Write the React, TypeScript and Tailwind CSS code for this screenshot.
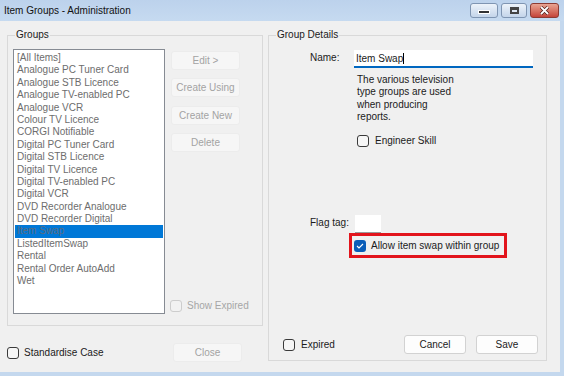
import { ReactNode } from 'react';

const groups = [
  '[All Items]',
  'Analogue PC Tuner Card',
  'Analogue STB Licence',
  'Analogue TV-enabled PC',
  'Analogue VCR',
  'Colour TV Licence',
  'CORGI Notifiable',
  'Digital PC Tuner Card',
  'Digital STB Licence',
  'Digital TV Licence',
  'Digital TV-enabled PC',
  'Digital VCR',
  'DVD Recorder Analogue',
  'DVD Recorder Digital',
  'Item Swap',
  'ListedItemSwap',
  'Rental',
  'Rental Order AutoAdd',
  'Wet',
];

function CheckBox({ checked, disabled }: { checked?: boolean; disabled?: boolean }) {
  if (checked) {
    return (
      <span className="w-[12px] h-[12px] rounded-[3px] bg-[#0a5db8] flex items-center justify-center shrink-0">
        <svg width="8" height="6" viewBox="0 0 8 6">
          <path d="M1 3 L3 5 L7 1" fill="none" stroke="#fff" strokeWidth="1.1" />
        </svg>
      </span>
    );
  }
  return (
    <span
      className={
        disabled
          ? 'w-[12px] h-[12px] rounded-[3px] border border-[#cdcdcd] bg-[#f2f2f2] shrink-0'
          : 'w-[12px] h-[12px] rounded-[3px] border border-[#3a3a3a] bg-[#f6f6f6] shrink-0'
      }
    />
  );
}

function Button({ children, disabled }: { children: ReactNode; disabled?: boolean }) {
  return (
    <div
      className={
        disabled
          ? 'h-[19px] w-[69px] rounded-[3px] border border-[#ececec] bg-[#f6f6f6] text-[#a3a3a3] flex items-center justify-center'
          : 'h-[19px] w-[62px] rounded-[3px] border border-[#d2d2d2] bg-[#fdfdfd] text-[#1b1b1b] flex items-center justify-center'
      }
    >
      {children}
    </div>
  );
}

function GroupBox({ title, className, children }: { title: string; className: string; children: ReactNode }) {
  return (
    <div className={`relative border border-[#d9d9d9] ${className}`}>
      <span className="absolute left-[7px] -top-[7px] bg-[#f0f0f0] px-[1px] leading-[12px] text-[#1b1b1b]">
        {title}
      </span>
      {children}
    </div>
  );
}

export default function App() {
  return (
    <div className="w-[564px] h-[376px] bg-[#c4d8ee] overflow-hidden font-['Liberation_Sans',Arial,sans-serif] text-[10px] text-[#1b1b1b]">
      {/* Title bar */}
      <div className="h-[21px] flex items-start bg-gradient-to-b from-[#bcd2ec] to-[#c6daf0]">
        <span className="pl-[4px] pt-[4px] text-[10px] leading-[14px] text-[#111]">Item Groups - Administration</span>
        <div className="ml-auto flex gap-[3px] pt-[3px] pr-[5px]">
          <div className="w-[28px] h-[15px] rounded-[3px] border border-[#7f95b2] bg-gradient-to-b from-[#edf3fa] to-[#c4d5ea] flex items-end justify-center pb-[3px]">
            <span className="w-[10px] h-[2px] bg-[#333] border border-[#fff] box-content" />
          </div>
          <div className="w-[26px] h-[15px] rounded-[3px] border border-[#7f95b2] bg-gradient-to-b from-[#edf3fa] to-[#c4d5ea] flex items-center justify-center">
            <span className="w-[9px] h-[7px] border-[2px] border-t-[3px] border-[#444] bg-[#dfe8f3]" />
          </div>
          <div className="w-[29px] h-[15px] rounded-[3px] border border-[#8d3b33] bg-gradient-to-b from-[#e8a493] to-[#c4433a] flex items-center justify-center">
            <svg width="11" height="9" viewBox="0 0 11 9">
              <path d="M2 1 L9 8 M9 1 L2 8" stroke="#4a1a16" strokeWidth="3.2" />
              <path d="M2 1 L9 8 M9 1 L2 8" stroke="#fff" strokeWidth="1.8" />
            </svg>
          </div>
        </div>
      </div>

      {/* Client area */}
      <div className="w-[560px] h-[351px] bg-[#f0f0f0] flex pl-[7px] pt-[14px]">
        {/* Left column */}
        <div className="w-[256px] flex flex-col">
          <GroupBox title="Groups" className="h-[291px] flex pl-[5px] pt-[13px]">
            <div className="w-[152px] h-[265px] border border-[#868b93] bg-white px-[1px] pt-[2px]">
              {groups.map((g) => (
                <div
                  key={g}
                  className={
                    g === 'Item Swap'
                      ? 'h-[12.4px] leading-[12.4px] pl-[2px] bg-[#0078d7] text-[#5a6c80] whitespace-nowrap'
                      : 'h-[12.4px] leading-[12.4px] pl-[2px] text-[#6d6d6d] whitespace-nowrap'
                  }
                >
                  {g}
                </div>
              ))}
            </div>
            <div className="ml-[6px] h-[265px] flex flex-col gap-[8.4px] pt-[2px]">
              <Button disabled>Edit &gt;</Button>
              <Button disabled>Create Using</Button>
              <Button disabled>Create New</Button>
              <Button disabled>Delete</Button>
              <div className="mt-auto mb-[1px] -ml-[1px] flex items-center gap-[5px] text-[#a6a6a6]">
                <CheckBox disabled />
                <span>Show Expired</span>
              </div>
            </div>
          </GroupBox>
          <div className="mt-[17px] flex items-center">
            <CheckBox />
            <span className="ml-[5px]">Standardise Case</span>
            <div className="ml-auto mr-[21px]">
              <Button disabled>Close</Button>
            </div>
          </div>
        </div>

        {/* Right column */}
        <GroupBox title="Group Details" className="ml-[5px] w-[279px] h-[326px] flex flex-col pt-[14px]">
          <div className="flex pl-[41px]">
            <span className="w-[44px] pt-[2px] leading-[12px]">Name:</span>
            <div className="flex flex-col">
              <div className="w-[179px] h-[18px] bg-white border-b-2 border-[#0067c0] flex items-center pl-[2px]">
                <span>Item Swap</span>
                <span className="w-[1px] h-[11px] bg-black" />
              </div>
              <div className="pl-[3px] mt-[6px] leading-[12.3px]">
                The various television
                <br />
                type groups are used
                <br />
                when producing
                <br />
                reports.
              </div>
              <div className="pl-[3px] mt-[10px] flex items-center gap-[6px]">
                <CheckBox />
                <span>Engineer Skill</span>
              </div>
            </div>
          </div>

          <div className="flex pl-[41px] mt-[67px]">
            <span className="w-[45px] pt-[2px] leading-[12px]">Flag tag:</span>
            <div className="flex flex-col">
              <div className="w-[26px] h-[18px] bg-white border-b border-[#9a9a9a]" />
              <div className="-ml-[6px] w-[158px] h-[25px] border-[3px] border-[#e2141c] flex items-center pl-[2px] gap-[5px]">
                <CheckBox checked />
                <span>Allow item swap within group</span>
              </div>
            </div>
          </div>

          <div className="mt-auto mb-[6px] flex items-center pl-[14px] pr-[8px]">
            <CheckBox />
            <span className="ml-[6px]">Expired</span>
            <div className="ml-auto flex gap-[10px]">
              <Button>Cancel</Button>
              <Button>Save</Button>
            </div>
          </div>
        </GroupBox>
      </div>
    </div>
  );
}
